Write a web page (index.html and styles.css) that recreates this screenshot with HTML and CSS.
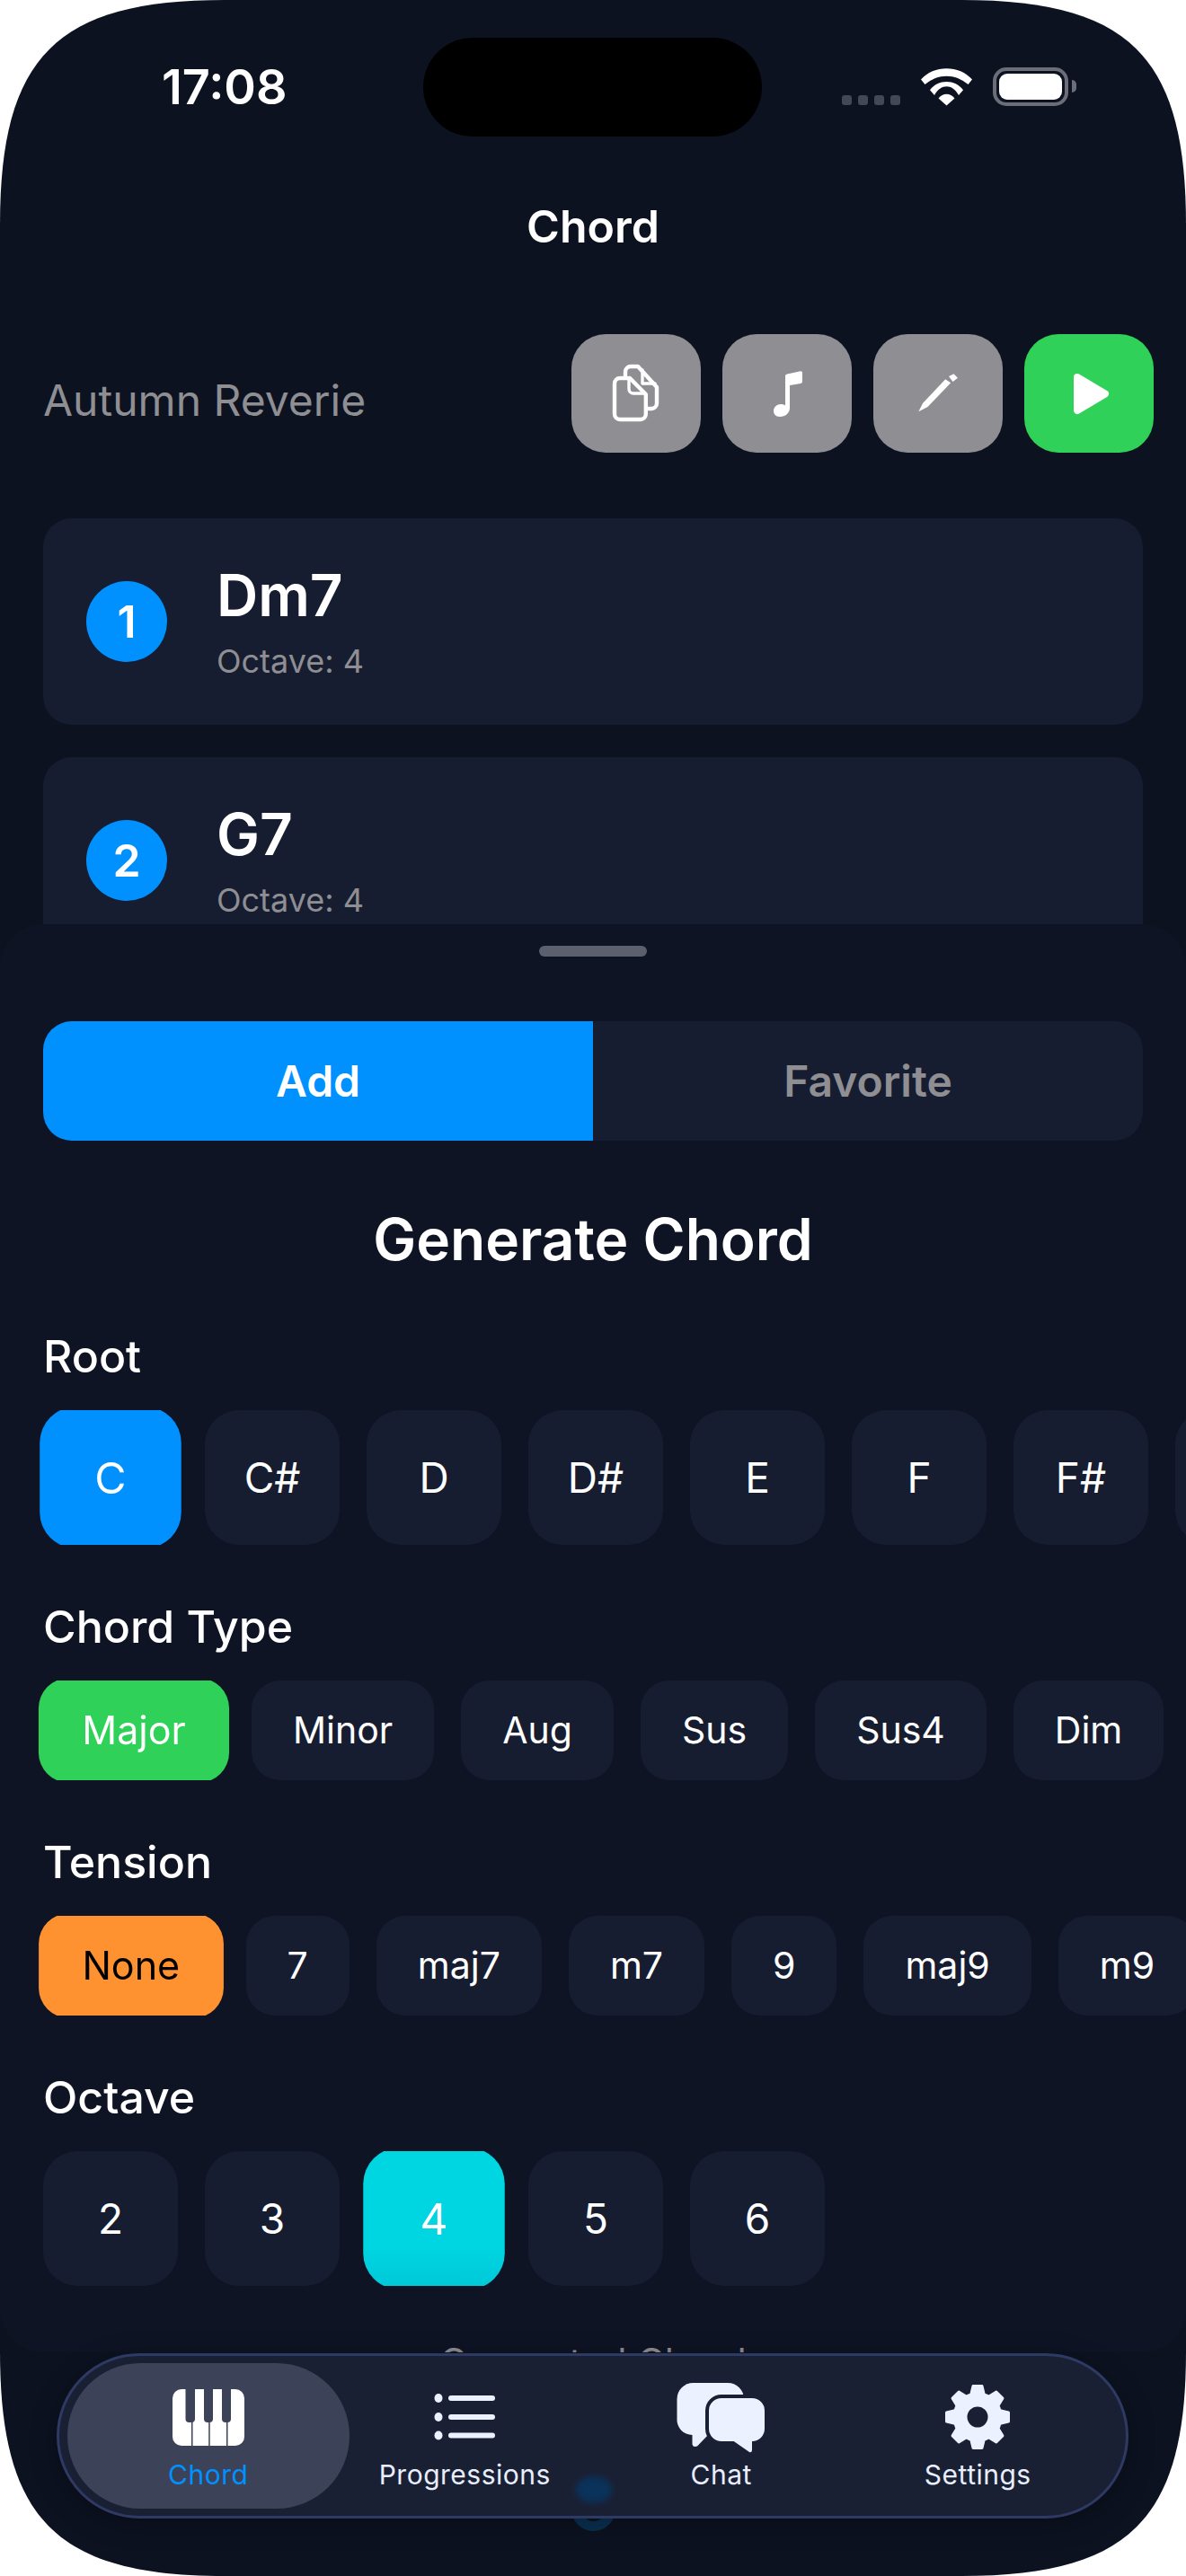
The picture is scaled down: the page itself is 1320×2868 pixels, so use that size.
FILE: index.html
```html
<!DOCTYPE html>
<html>
<head>
    <title>Chord</title>
    <link rel="stylesheet" href="styles.css">
</head>
<body>
    <div class="screen">
        <!-- Status bar -->
        <div class="status-bar">
            <div class="time">17:08</div>
            <div class="island"></div>
            <div class="status-icons">
                <div class="signal"><span></span><span></span><span></span><span></span></div>
                <svg class="wifi" width="57" height="42" viewBox="0 0 57 42">
                    <path d="M0 12.5C14-4 43-4 57 12.5L52.5 18C38 5.5 19 5.5 4.5 18Z"/>
                    <path d="M10 24.3C19 12 38 12 47 24.3L42 30C35 17 22 17 15 30Z"/>
                    <path d="M19.5 33.5C24 27 33 27 37.5 33.5L28.5 41.5Z"/>
                </svg>
                <div class="battery"><div class="battery-level"></div></div>
            </div>
        </div>

        <h1 class="page-title">Chord</h1>

        <!-- Song name and actions -->
        <div class="song-row">
            <div class="song-name">Autumn Reverie</div>
            <div class="song-actions">
                <button class="action-btn copy">
                    <svg width="60" height="70" viewBox="0 0 60 70" fill="none" stroke="#fff" stroke-width="4.4" stroke-linejoin="round" stroke-linecap="round">
                        <path d="M17 15V11a6 6 0 0 1 6-6H31L52 28V46a6 6 0 0 1-6 6H41"/>
                        <path d="M36 9V24H50" stroke-width="3.4"/>
                        <path d="M11 18H22L39.8 36V58a6 6 0 0 1-6 6H11a6 6 0 0 1-6-6V24a6 6 0 0 1 6-6Z"/>
                        <path d="M21 18V30a5 5 0 0 0 5 5H39" stroke-width="3.4"/>
                    </svg>
                </button>
                <button class="action-btn">
                    <svg width="40" height="56" viewBox="0 0 40 56" fill="#fff">
                        <path d="M18 8.5Q18 7 20 6.5L35 3.2Q37 3 37 5V15Q37 16.5 35 17L23 19V44C23 50 18 54 12 54C7 54 5 51 5 47.5C5 43 9 40 13 40C15 40 17 40.5 18 41.5Z"/>
                    </svg>
                </button>
                <button class="action-btn">
                    <svg width="48" height="48" viewBox="0 0 48 48" fill="#fff">
                        <path d="M2.4 44.3L7 35L32.2 8.3L38.2 12.3L12.5 39Z"/>
                        <path d="M36 5L41.4 2.3L46 6.7L40.5 11Z"/>
                    </svg>
                </button>
                <button class="action-btn play">
                    <svg width="50" height="55" viewBox="0 0 50 55" fill="#fff" stroke="#fff" stroke-width="8" stroke-linejoin="round">
                        <path d="M9 9L40 27.5L9 46Z"/>
                    </svg>
                </button>
            </div>
        </div>

        <!-- Chords in the progression -->
        <div class="chord-list">
            <div class="chord-card">
                <div class="chord-number">1</div>
                <div class="chord-info">
                    <div class="chord-name">Dm7</div>
                    <div class="chord-octave">Octave: 4</div>
                </div>
            </div>
            <div class="chord-card">
                <div class="chord-number">2</div>
                <div class="chord-info">
                    <div class="chord-name">G7</div>
                    <div class="chord-octave">Octave: 4</div>
                </div>
            </div>
        </div>

        <!-- Bottom sheet -->
        <div class="sheet">
            <div class="sheet-handle"></div>

            <div class="tabs">
                <div class="tab active">Add</div>
                <div class="tab">Favorite</div>
            </div>

            <h2 class="sheet-title">Generate Chord</h2>

            <div class="picker-label">Root</div>
            <div class="picker-row">
                <div class="chip square selected-blue">C</div>
                <div class="chip square">C#</div>
                <div class="chip square">D</div>
                <div class="chip square">D#</div>
                <div class="chip square">E</div>
                <div class="chip square">F</div>
                <div class="chip square">F#</div>
                <div class="chip square"></div>
            </div>

            <div class="picker-label">Chord Type</div>
            <div class="picker-row">
                <div class="chip selected-green">Major</div>
                <div class="chip">Minor</div>
                <div class="chip">Aug</div>
                <div class="chip">Sus</div>
                <div class="chip">Sus4</div>
                <div class="chip">Dim</div>
            </div>

            <div class="picker-label">Tension</div>
            <div class="picker-row">
                <div class="chip selected-orange">None</div>
                <div class="chip">7</div>
                <div class="chip">maj7</div>
                <div class="chip">m7</div>
                <div class="chip">9</div>
                <div class="chip">maj9</div>
                <div class="chip">m9</div>
            </div>

            <div class="picker-label">Octave</div>
            <div class="picker-row">
                <div class="chip square">2</div>
                <div class="chip square">3</div>
                <div class="chip square selected-cyan">4</div>
                <div class="chip square">5</div>
                <div class="chip square">6</div>
            </div>

            <div class="generated-label">Generated Chord</div>
        </div>

        <!-- Bits of the page showing around the tab bar -->
        <div class="peek-ring"></div>

        <!-- Tab bar -->
        <div class="tab-bar">
            <div class="tab-item active">
                <div class="tab-icon">
                    <svg width="80" height="63" viewBox="0 0 80 63">
                        <rect width="80" height="63" rx="10" fill="#fff"/>
                        <path d="M14.5 0H25V33a4 4 0 0 1-4 4h-2.500a4 4 0 0 1-4-4Z" fill="#3c4257"/>
                        <path d="M35 0H45V33a4 4 0 0 1-4 4h-2a4 4 0 0 1-4-4Z" fill="#3c4257"/>
                        <path d="M55 0H65V33a4 4 0 0 1-4 4h-2a4 4 0 0 1-4-4Z" fill="#3c4257"/>
                        <path d="M21 36H22.500V63H21ZM40.200 36H41.700V63H40.200ZM60 36H61.500V63H60Z" fill="#3c4257"/>
                    </svg>
                </div>
                <div class="tab-text">Chord</div>
            </div>
            <div class="tab-item">
                <div class="tab-icon">
                    <svg width="68" height="52" viewBox="0 0 68 52" fill="#ecf1ff">
                        <ellipse cx="5" cy="5" rx="4.500" ry="5"/>
                        <ellipse cx="5" cy="26" rx="4.500" ry="5"/>
                        <ellipse cx="5" cy="46.500" rx="4.500" ry="5"/>
                        <rect x="16" y="2" width="52" height="6" rx="3"/>
                        <rect x="16" y="23" width="52" height="6" rx="3"/>
                        <rect x="16" y="43.500" width="52" height="6" rx="3"/>
                    </svg>
                </div>
                <div class="tab-text">Progressions</div>
            </div>
            <div class="tab-item">
                <div class="tab-icon">
                    <svg width="105" height="85" viewBox="0 0 105 85" fill="#ecf1ff">
                        <path d="M21.500 4H60a18 18 0 0 1 18 18V44a18 18 0 0 1-18 18H38L26 74.500Q21 76 20.500 72V62A17 17 0 0 1 3.500 44V22a18 18 0 0 1 18-18Z"/>
                        <path d="M53 21H87a14 14 0 0 1 14 14V55a14 14 0 0 1-14 14V78q0 4-3 3L66.700 69H53a14 14 0 0 1-14-14V35a14 14 0 0 1 14-14Z" stroke="#1a2034" stroke-width="8" paint-order="stroke"/>
                    </svg>
                </div>
                <div class="tab-text">Chat</div>
            </div>
            <div class="tab-item">
                <div class="tab-icon">
                    <svg width="76" height="76" viewBox="-38 -38 76 76">
                        <circle r="19.500" fill="none" stroke="#ecf1ff" stroke-width="16"/>
                        <g fill="#ecf1ff" stroke="#ecf1ff" stroke-width="3" stroke-linejoin="round">
                            <path d="M-5-34.500H5L8-22H-8Z"/>
                            <path d="M-5-34.500H5L8-22H-8Z" transform="rotate(45)"/>
                            <path d="M-5-34.500H5L8-22H-8Z" transform="rotate(90)"/>
                            <path d="M-5-34.500H5L8-22H-8Z" transform="rotate(135)"/>
                            <path d="M-5-34.500H5L8-22H-8Z" transform="rotate(180)"/>
                            <path d="M-5-34.500H5L8-22H-8Z" transform="rotate(225)"/>
                            <path d="M-5-34.500H5L8-22H-8Z" transform="rotate(270)"/>
                            <path d="M-5-34.500H5L8-22H-8Z" transform="rotate(315)"/>
                        </g>
                    </svg>
                </div>
                <div class="tab-text">Settings</div>
            </div>
        </div>

        <div class="peek-blob"></div>
    </div>
</body>
</html>
```

FILE: styles.css
```css
/* Page and phone screen */
body {
    margin: 0;
    padding: 0;
    background-color: #ffffff;
    font-family: Inter, "Noto Sans", sans-serif;
    color: #ffffff;
}

.screen {
    position: relative;
    width: 1320px;
    height: 2868px;
    overflow: hidden;
    background-color: #0c1220;
    /* Continuous corners of the device */
    clip-path: path('M0 250C0 63 63 0 250 0H1070C1257 0 1320 63 1320 250V2618C1320 2805 1257 2868 1070 2868H250C63 2868 0 2805 0 2618Z');
}

/* Status bar */
.status-bar {
    display: flex;
    align-items: flex-start;
    height: 110px;
    padding: 42px 131px 0 180px;
}

.time {
    width: 291px;
    margin-top: 28px;
    font-size: 54px;
    line-height: 54px;
    font-weight: 600;
}

.island {
    width: 377px;
    height: 110px;
    border-radius: 55px;
    background-color: #000000;
}

.status-icons {
    display: flex;
    align-items: flex-end;
    gap: 23px;
    margin-top: 33px;
    margin-left: auto;
}

.signal {
    display: flex;
    gap: 7px;
    margin-bottom: 1px;
}

.signal span {
    width: 11px;
    height: 11px;
    border-radius: 3px;
    background-color: #444854;
}

.wifi {
    display: block;
    fill: #ffffff;
}

.battery {
    position: relative;
    box-sizing: border-box;
    width: 84px;
    height: 43px;
    padding: 3px;
    border: 4px solid #6b6e78;
    border-radius: 15px;
}

.battery::after {
    content: "";
    position: absolute;
    top: 10px;
    right: -13px;
    width: 5px;
    height: 14px;
    border-radius: 0 5px 5px 0;
    background-color: #6b6e78;
}

.battery-level {
    height: 100%;
    border-radius: 9px;
    background-color: #ffffff;
}

/* Header */
.page-title {
    margin: 0;
    padding-top: 70px;
    font-size: 50px;
    line-height: 60px;
    font-weight: 600;
    text-align: center;
}

.song-row {
    display: flex;
    align-items: center;
    justify-content: space-between;
    margin-top: 90px;
    padding: 0 36px 0 48px;
}

.song-name {
    padding-top: 14px;
    font-size: 48px;
    color: #8e8e93;
}

.song-actions {
    display: flex;
    gap: 24px;
}

.action-btn {
    display: flex;
    align-items: center;
    justify-content: center;
    width: 144px;
    height: 132px;
    padding: 0;
    border: none;
    border-radius: 38px;
    background-color: #8e8e93;
}

.action-btn.copy svg {
    margin-left: 2px;
}

.action-btn.play {
    background-color: #30d158;
}

.action-btn.play svg {
    margin-left: 6px;
}

/* Chord cards */
.chord-list {
    display: flex;
    flex-direction: column;
    gap: 36px;
    margin-top: 73px;
    padding: 0 48px;
}

.chord-card {
    display: flex;
    align-items: center;
    gap: 55px;
    height: 230px;
    padding-left: 48px;
    border-radius: 32px;
    background-color: #171d30;
}

.chord-number {
    width: 90px;
    height: 90px;
    border-radius: 50%;
    background-color: #0091ff;
    font-size: 50px;
    line-height: 90px;
    font-weight: 600;
    text-align: center;
}

.chord-name {
    font-size: 64px;
    line-height: 72px;
    font-weight: 600;
}

.chord-octave {
    margin-top: 15px;
    font-size: 36px;
    line-height: 44px;
    color: #8e8e93;
}

/* Bottom sheet */
.sheet {
    position: absolute;
    top: 1029px;
    left: 0;
    right: 0;
    height: 1590px;
    overflow: hidden;
    border-radius: 48px;
    background-color: #0e1424;
}

.sheet-handle {
    width: 120px;
    height: 12px;
    margin: 24px auto 0;
    border-radius: 6px;
    background-color: #5b5f6e;
}

.tabs {
    display: flex;
    height: 133px;
    margin: 72px 48px 0;
    overflow: hidden;
    border-radius: 32px;
    background-color: #171d30;
}

.tab {
    flex: 1;
    font-size: 48px;
    line-height: 133px;
    font-weight: 600;
    text-align: center;
    color: #8e8e93;
}

.tab.active {
    background-color: #0091ff;
    color: #ffffff;
}

.sheet-title {
    margin: 71px 0 0;
    font-size: 64px;
    line-height: 78px;
    font-weight: 600;
    text-align: center;
}

/* Pickers */
.picker-label {
    margin: 62px 0 31px;
    padding-left: 48px;
    font-size: 50px;
    line-height: 58px;
    font-weight: 500;
}

.picker-row {
    display: flex;
    gap: 30px;
    padding: 0 48px;
    overflow: hidden;
}

.chip {
    flex: none;
    height: 111px;
    padding: 0 46px;
    border-radius: 32px;
    background-color: #171d30;
    font-size: 41px;
    line-height: 111px;
}

.chip.square {
    width: 150px;
    height: 150px;
    padding: 0;
    border-radius: 38px;
    font-size: 46px;
    line-height: 150px;
    text-align: center;
}

.selected-blue,
.selected-green,
.selected-orange,
.selected-cyan {
    transform: scale(1.05);
}

.selected-blue {
    background-color: #0091ff;
}

.selected-green {
    background-color: #30d158;
}

.selected-orange {
    background-color: #ff9230;
    color: #000000;
}

.chip.selected-cyan {
    background: linear-gradient(#00d5e2 70%, #00c8d8);
}

.generated-label {
    margin-top: 56px;
    font-size: 42px;
    line-height: 58px;
    text-align: center;
    color: #8e8e93;
}

/* Tab bar */
.tab-bar {
    position: absolute;
    top: 2620px;
    left: 63px;
    display: flex;
    box-sizing: border-box;
    width: 1193px;
    height: 184px;
    padding: 0 22px 0 23px;
    border: 3px solid #2e3a63;
    border-radius: 92px;
    background-color: #1a2034;
    box-shadow: 0 6px 30px rgba(0, 0, 0, 0.3);
}

.tab-item {
    position: relative;
    flex: 1;
    display: flex;
    flex-direction: column;
    align-items: center;
    text-align: center;
}

.tab-item.active::before {
    content: "";
    position: absolute;
    top: 8px;
    bottom: 8px;
    left: -14px;
    right: -14px;
    border-radius: 81px;
    background-color: #3c4257;
}

.tab-icon {
    position: relative;
    display: flex;
    align-items: center;
    justify-content: center;
    height: 86px;
    margin-top: 25px;
}

.tab-text {
    position: relative;
    margin-top: 3px;
    font-size: 30px;
    line-height: 36px;
    letter-spacing: 0.5px;
    color: #e8eefc;
}

.tab-item.active .tab-text {
    color: #0091ff;
}

/* Number badge of the next card, seen through and under the tab bar */
.peek-ring {
    position: absolute;
    top: 2769px;
    left: 636px;
    box-sizing: border-box;
    width: 49px;
    height: 49px;
    border: 11px solid #0a3050;
    border-radius: 50%;
}

.peek-blob {
    position: absolute;
    top: 2757px;
    left: 641px;
    width: 40px;
    height: 30px;
    border-radius: 50%;
    background-color: #0a325a;
    filter: blur(3px);
}
```
